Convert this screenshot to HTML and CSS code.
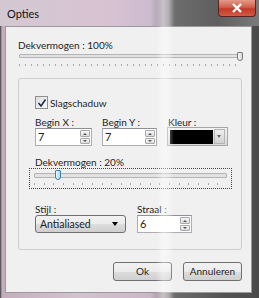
FILE: index.html
```html
<!DOCTYPE html>
<html>
<head>
  <title>Opties</title>
  <link rel="stylesheet" href="styles.css">
</head>
<body>
  <div class="window">
    <div class="titlebar">
      <span class="title">Opties</span>
      <div class="close">
        <svg width="12" height="10" viewBox="0 0 12 10"><path d="M2 1 L10 9 M10 1 L2 9" stroke="#fff" stroke-width="2.4"/></svg>
      </div>
    </div>

    <div class="client">
      <div class="label topLabel">Dekvermogen : 100%</div>
      <div class="slider sliderFull">
        <div class="track"></div>
        <div class="thumb thumbEnd"></div>
        <div class="ticks ticksFine"></div>
      </div>

      <div class="group">
        <div class="check">
          <span class="box">
            <svg width="10" height="10" viewBox="0 0 10 10"><path d="M1.5 5 L4 8 L8.5 1.5" stroke="#1c2c50" stroke-width="1.6" fill="none"/></svg>
          </span>
          Slagschaduw
        </div>

        <div class="fields">
          <div class="field">
            <div class="label">Begin X :</div>
            <div class="spin"><span class="value">7</span><div class="arrows"><span class="up"></span><span class="down"></span></div></div>
          </div>
          <div class="field">
            <div class="label">Begin Y :</div>
            <div class="spin"><span class="value">7</span><div class="arrows"><span class="up"></span><span class="down"></span></div></div>
          </div>
          <div class="field">
            <div class="label kleurLabel">Kleur :</div>
            <div class="colorCombo"><span class="swatch"></span><span class="colorArrow"></span></div>
          </div>
        </div>

        <div class="label sliderLabel">Dekvermogen : 20%</div>
        <div class="focusBox">
          <div class="slider sliderPart">
            <div class="track"></div>
            <div class="thumb thumbLow"></div>
            <div class="ticks ticksWide"></div>
          </div>
        </div>

        <div class="fields bottomFields">
          <div class="field">
            <div class="label">Stijl :</div>
            <div class="combo">Antialiased<span class="comboArrow"></span></div>
          </div>
          <div class="field">
            <div class="label">Straal :</div>
            <div class="spin spinSmall"><span class="value">6</span><div class="arrows"><span class="up"></span><span class="down"></span></div></div>
          </div>
        </div>
      </div>

      <div class="buttons">
        <div class="button">Ok</div>
        <div class="button">Annuleren</div>
      </div>
    </div>

    <div class="glare"></div>
  </div>
</body>
</html>
```

FILE: styles.css
```css
body {
  margin: 0;
  font-family: Lato, "Open Sans", sans-serif;
  font-size: 10px;
  color: #1e1e1e;
}

.window {
  position: relative;
  width: 259px;
  height: 298px;
  overflow: hidden;
  display: flex;
  flex-direction: column;
  background: linear-gradient(to right, #3c3c3c 0, #c4aebd 2px, #d4c2cf 30%, #cbb6c8 58%, #6a6a6a 68%, #555 85%, #4a4a4a 100%);
}

.titlebar {
  height: 26px;
  display: flex;
  align-items: flex-start;
  padding-left: 7px;
  background: linear-gradient(to right, #d3c8d2 0, #d8c3d3 40%, #cdbccf 58%, #6c6c6c 68%, #5f5f5f 84%, #7a7a7a 100%);
}

.title {
  margin-top: 6px;
  line-height: 16px;
  font-size: 11px;
  color: #111;
}

.close {
  margin-left: auto;
  margin-right: 3px;
  width: 38px;
  height: 17px;
  box-sizing: border-box;
  border: 1px solid #5a2420;
  border-top: none;
  border-radius: 0 0 4px 4px;
  background: linear-gradient(#e49a88 0, #d2604a 45%, #c03a28 55%, #d45a44 100%);
  display: flex;
  align-items: center;
  justify-content: center;
}

.client {
  flex: 1;
  margin: 0 7px 5px 5px;
  border: 1px solid #9a9a9a;
  background: #f0f0f0;
  padding: 10px 0 0 12px;
}

.label {
  line-height: 16px;
  height: 16px;
}

.slider {
  position: relative;
}

.sliderFull {
  width: 222px;
  height: 20px;
}

.track {
  position: absolute;
  left: 1px;
  right: 0;
  top: 1px;
  height: 4px;
  box-sizing: border-box;
  border: 1px solid #b4b4b4;
  border-radius: 1px;
  background: #e2e2e2;
}

.thumb {
  position: absolute;
  top: -1px;
  width: 6px;
  height: 9px;
  box-sizing: border-box;
  border: 1px solid #7a7a7a;
  border-radius: 1px 1px 3px 3px;
  background: linear-gradient(to right, #f8f8f8, #d8d8d8);
}

.thumbEnd {
  left: 219px;
}

.ticks {
  position: absolute;
  left: 1px;
  right: 0;
  top: 11px;
  height: 2px;
}

.ticksFine {
  background: repeating-linear-gradient(to right, #a8a8a8 0, #a8a8a8 1px, transparent 1px, transparent 6px);
}

.group {
  margin-top: 5px;
  width: 224px;
  height: 172px;
  box-sizing: border-box;
  border: 1px solid #cfcfcf;
  border-radius: 3px;
  padding: 17px 0 0 16px;
}

.check {
  display: flex;
  align-items: center;
  height: 13px;
  gap: 2px;
}

.box {
  width: 11px;
  height: 11px;
  border: 1px solid #8e8f8f;
  background: linear-gradient(135deg, #dcdcdc, #fbfbfb);
  display: flex;
  align-items: center;
  justify-content: center;
}

.fields {
  display: flex;
  gap: 10px;
  margin-top: 7px;
}

.fields .label {
  height: 12px;
  line-height: 12px;
}

.spin {
  width: 57px;
  height: 18px;
  box-sizing: border-box;
  border: 1px solid #abadb3;
  border-top-color: #8e9096;
  background: #fff;
  display: flex;
  align-items: stretch;
}

.value {
  flex: 1;
  padding-left: 2px;
  line-height: 16px;
  font-size: 11px;
}

.arrows {
  width: 10px;
  display: flex;
  flex-direction: column;
  gap: 1px;
  padding: 1px 1px 1px 0;
}

.arrows span {
  flex: 1;
  box-sizing: border-box;
  border: 1px solid #a8a8a8;
  border-radius: 1px;
  background: linear-gradient(#f6f6f6, #dedede);
  position: relative;
}

.arrows .up::after,
.arrows .down::after {
  content: "";
  position: absolute;
  left: 2px;
  top: 2px;
  border-left: 2px solid transparent;
  border-right: 2px solid transparent;
}

.arrows .up::after {
  border-bottom: 2px solid #555;
}

.arrows .down::after {
  top: 1px;
  border-top: 2px solid #555;
}

.field:nth-child(2) .spin {
  width: 55px;
}

.kleurLabel {
  padding-left: 1px;
}

.colorCombo {
  width: 61px;
  height: 19px;
  margin-top: -1px;
  box-sizing: border-box;
  border: 1px solid #a6a6a6;
  background: linear-gradient(#f2f2f2, #dadada);
  display: flex;
  align-items: center;
  padding: 2px;
  gap: 1px;
}

.swatch {
  width: 43px;
  height: 14px;
  background: #000;
}

.colorArrow {
  width: 11px;
  height: 15px;
  box-sizing: border-box;
  border: 1px solid #b4b4b4;
  background: linear-gradient(#eeeeee, #d2d2d2);
  position: relative;
}

.colorArrow::after {
  content: "";
  position: absolute;
  left: 2px;
  top: 5px;
  border-left: 2.5px solid transparent;
  border-right: 2.5px solid transparent;
  border-top: 3px solid #666;
}

.sliderLabel {
  margin-top: 10px;
  height: 12px;
  line-height: 12px;
}

.focusBox {
  margin-left: -6px;
  width: 203px;
  height: 21px;
  box-sizing: border-box;
  border: 1px dotted #444;
  padding: 3px 4px 0 4px;
}

.sliderPart {
  height: 14px;
}

.sliderPart .track {
  left: 0;
  height: 5px;
}

.thumbLow {
  left: 21px;
  top: -2px;
  width: 6px;
  height: 10px;
  border-color: #3c7fb1;
  background: linear-gradient(to right, #eaf6fd, #a7d9f5);
}

.ticksWide {
  left: 0;
  top: 11px;
  height: 2px;
  background: repeating-linear-gradient(to right, #a8a8a8 0, #a8a8a8 1px, transparent 1px, transparent 9.65px);
}

.bottomFields {
  margin-top: 14px;
  gap: 11px;
}

.combo {
  position: relative;
  width: 91px;
  height: 18px;
  box-sizing: border-box;
  border: 1px solid #707070;
  border-radius: 3px;
  background: linear-gradient(#f2f2f2 0, #ebebeb 50%, #dddddd 51%, #cfcfcf 100%);
  line-height: 16px;
  padding-left: 4px;
  font-size: 10.5px;
}

.comboArrow {
  position: absolute;
  right: 7px;
  top: 6px;
  border-left: 3.5px solid transparent;
  border-right: 3.5px solid transparent;
  border-top: 4px solid #000;
}

.spinSmall {
  width: 53px;
}

.buttons {
  display: flex;
  justify-content: flex-end;
  gap: 11px;
  margin-top: 12px;
  padding-right: 9px;
}

.button {
  width: 59px;
  height: 19px;
  box-sizing: border-box;
  border: 1px solid #707070;
  border-radius: 3px;
  background: linear-gradient(#f2f2f2 0, #ebebeb 50%, #dddddd 51%, #cfcfcf 100%);
  text-align: center;
  line-height: 17px;
}

.glare {
  position: absolute;
  top: 0;
  bottom: 0;
  left: 156px;
  width: 18px;
  background: linear-gradient(to right, rgba(255, 255, 255, 0), rgba(255, 255, 255, 0.45) 40%, rgba(255, 255, 255, 0.35) 70%, rgba(255, 255, 255, 0));
  pointer-events: none;
}
```
